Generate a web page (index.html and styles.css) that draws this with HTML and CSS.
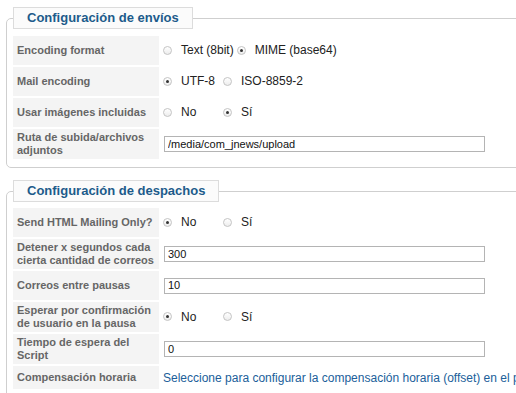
FILE: index.html
```html
<!DOCTYPE html>
<html lang="es">
<head>
<meta charset="utf-8">
<title>Configuración</title>
<link rel="stylesheet" href="styles.css">
</head>
<body>
<fieldset class="panel">
  <legend class="panel-title">Configuración de envíos</legend>
  <table class="params">
    <tr>
      <td class="key">Encoding format</td>
      <td class="val">
        <span class="opt"><span class="radio"></span>Text (8bit)</span><span class="opt"><span class="radio on"></span>MIME (base64)</span>
      </td>
    </tr>
    <tr>
      <td class="key">Mail encoding</td>
      <td class="val">
        <span class="opt"><span class="radio on"></span>UTF-8</span><span class="opt"><span class="radio"></span>ISO-8859-2</span>
      </td>
    </tr>
    <tr>
      <td class="key">Usar imágenes incluidas</td>
      <td class="val">
        <span class="opt"><span class="radio"></span>No</span><span class="opt"><span class="radio on"></span>Sí</span>
      </td>
    </tr>
    <tr>
      <td class="key">Ruta de subida/archivos adjuntos</td>
      <td class="val"><input class="field" type="text" value="/media/com_jnews/upload"></td>
    </tr>
  </table>
</fieldset>

<fieldset class="panel panel-next">
  <legend class="panel-title">Configuración de despachos</legend>
  <table class="params">
    <tr>
      <td class="key">Send HTML Mailing Only?</td>
      <td class="val">
        <span class="opt"><span class="radio on"></span>No</span><span class="opt"><span class="radio"></span>Sí</span>
      </td>
    </tr>
    <tr>
      <td class="key">Detener x segundos cada cierta cantidad de correos</td>
      <td class="val"><input class="field" type="text" value="300"></td>
    </tr>
    <tr>
      <td class="key">Correos entre pausas</td>
      <td class="val"><input class="field" type="text" value="10"></td>
    </tr>
    <tr>
      <td class="key">Esperar por confirmación de usuario en la pausa</td>
      <td class="val">
        <span class="opt"><span class="radio on"></span>No</span><span class="opt"><span class="radio"></span>Sí</span>
      </td>
    </tr>
    <tr>
      <td class="key">Tiempo de espera del Script</td>
      <td class="val"><input class="field" type="text" value="0"></td>
    </tr>
    <tr>
      <td class="key key-short">Compensación horaria</td>
      <td class="val"><a class="link" href="#">Seleccione para configurar la compensación horaria (offset) en el panel de configuración global</a></td>
    </tr>
  </table>
</fieldset>
</body>
</html>
```

FILE: styles.css
```css
html, body {
  overflow: hidden;
}
body {
  margin: 0;
  padding: 7px 0 0 6px;
  background: #fff;
  font-family: "Liberation Sans", Arial, sans-serif;
  font-size: 12px;
  color: #222;
}
.panel {
  width: 620px;
  margin: 0 0 12px 0;
  padding: 5px 4px 6px 4px;
  border: 1px solid #cfcfcf;
  border-radius: 5px;
}
.panel-next {
  padding-top: 4px;
}
.panel-title {
  margin-left: 2px;
  padding: 3px 13px 3px 13px;
  border: 1px solid #dcdcdc;
  background: #fbfbfb;
  color: #1d5b8b;
  font-size: 13px;
  font-weight: bold;
  line-height: 14px;
}
.params {
  width: 600px;
  table-layout: fixed;
  border-collapse: separate;
  border-spacing: 2px 2px;
}
.key {
  width: 140px;
  height: 25px;
  padding: 2px 2px 2px 4px;
  background: #f4f4f4;
  color: #666;
  font-size: 11px;
  font-weight: bold;
  line-height: 13px;
  vertical-align: middle;
}
.key-short {
  height: 19px;
}
.val {
  padding: 2px 0 2px 2px;
  vertical-align: middle;
  white-space: nowrap;
  overflow: hidden;
}
.opt {
  display: inline-flex;
  align-items: center;
  min-width: 57px;
  margin-right: 3px;
  line-height: 14px;
}
.radio {
  display: inline-block;
  box-sizing: border-box;
  width: 9px;
  height: 9px;
  margin-right: 9px;
  border: 1px solid #c4c4c4;
  border-radius: 50%;
  background: linear-gradient(#ffffff, #ededed);
  position: relative;
}
.radio.on::after {
  content: "";
  position: absolute;
  left: 2px;
  top: 2px;
  width: 3px;
  height: 3px;
  border-radius: 50%;
  background: #333;
}
.field {
  box-sizing: border-box;
  width: 321px;
  height: 16px;
  margin: 0 0 0 1px;
  padding: 0 3px 1px 3px;
  border: 1px solid #b4b4b4;
  font-family: "Liberation Sans", Arial, sans-serif;
  font-size: 11px;
  line-height: 13px;
  color: #111;
  background: #fff;
}
.link {
  color: #20609a;
  text-decoration: none;
}
```
